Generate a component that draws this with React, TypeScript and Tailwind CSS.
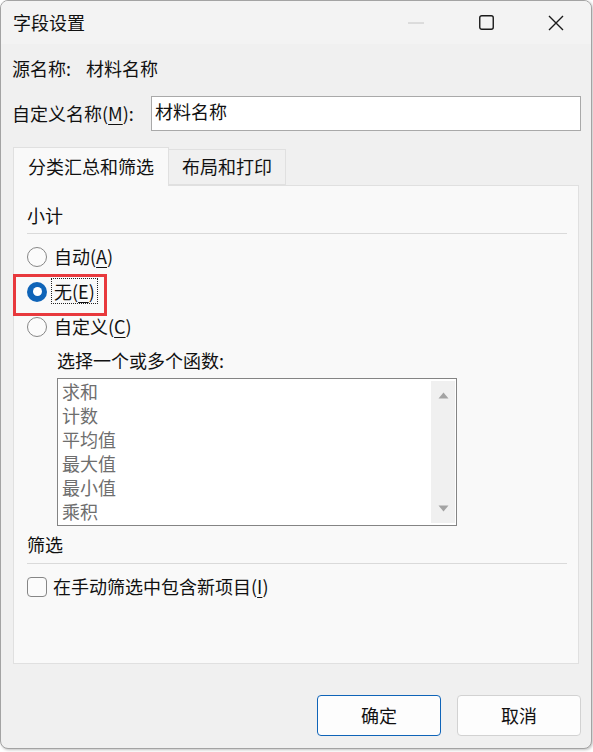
import React from "react"

const font = "font-['Microsoft_YaHei_UI','Noto_Sans_CJK_SC',sans-serif]"

function Radio({ checked }: { checked?: boolean }) {
  if (checked) {
    return (
      <span className="flex h-[20px] w-[20px] items-center justify-center rounded-full bg-[#0f64b8]">
        <span className="h-[9px] w-[9px] rounded-full bg-white" />
      </span>
    )
  }
  return <span className="h-[20px] w-[20px] rounded-full border border-[#868686] bg-[#fbfbfb]" />
}

function U({ children }: { children: React.ReactNode }) {
  return <span className="underline decoration-1 underline-offset-[3px]">{children}</span>
}

export default function App() {
  const funcs = ["求和", "计数", "平均值", "最大值", "最小值", "乘积"]

  return (
    <div className={`min-h-screen bg-white text-[18px] text-[#111] ${font}`}>
      <div className="flex h-[749px] w-[592px] flex-col overflow-hidden rounded-[8px] border border-[#a3a3a3] bg-[#f0f0f0] shadow-[1px_1px_3px_rgba(0,0,0,0.25)]">
        {/* title bar */}
        <div className="flex h-[43px] items-center bg-[#f3f3f3] pl-[12px]">
          <span className="pb-[2px] leading-[26px]">字段设置</span>
          <div className="ml-auto flex h-full">
            <div className="flex w-[70px] items-center justify-center">
              <svg width="16" height="2" viewBox="0 0 16 2">
                <line x1="0" y1="1" x2="16" y2="1" stroke="#c4c4c4" strokeWidth="1" />
              </svg>
            </div>
            <div className="flex w-[70px] items-center justify-center">
              <svg width="15" height="15" viewBox="0 0 15 15">
                <rect x="0.75" y="0.75" width="13.5" height="13.5" rx="2" fill="none" stroke="#1a1a1a" strokeWidth="1.4" />
              </svg>
            </div>
            <div className="flex w-[70px] items-center justify-center">
              <svg width="16" height="16" viewBox="0 0 16 16">
                <path d="M1 1 L15 15 M15 1 L1 15" stroke="#1a1a1a" strokeWidth="1.4" />
              </svg>
            </div>
          </div>
        </div>

        {/* body */}
        <div className="flex flex-1 flex-col pl-[11px] pr-[10px]">
          <div className="mt-[12px] flex h-[26px] items-center pb-[2px] leading-[24px]">
            <span className="w-[74px]">源名称:</span>
            <span>材料名称</span>
          </div>

          <div className="mt-[14px] flex h-[35px] items-center">
            <span className="w-[139px] pb-[2px] leading-[26px]">
              自定义名称(<U>M</U>):
            </span>
            <div className="h-[35px] flex-1 border border-[#a9a9a9] bg-white pl-[3px] pt-[1px] leading-[26px]">
              材料名称
            </div>
          </div>

          {/* tabs */}
          <div className="mt-[16px] flex items-end pl-[1px]">
            <div className="relative z-10 -mb-px flex h-[39px] w-[156px] items-center justify-center border border-b-0 border-[#e0e0e0] bg-[#f9f9f9] pb-[2px] leading-[26px]">
              分类汇总和筛选
            </div>
            <div className="flex h-[36px] w-[117px] items-center justify-center border border-l-0 border-[#e0e0e0] bg-[#f0f0f0] pb-[2px] leading-[26px]">
              布局和打印
            </div>
          </div>

          {/* panel */}
          <div className="ml-[1px] flex h-[479px] w-[566px] flex-col border border-[#e0e0e0] bg-[#f9f9f9] pl-[13px] pr-[11px]">
            <div className="mt-[16px] h-[26px] leading-[26px]">小计</div>
            <div className="mt-[5px] h-px bg-[#dadada]" />

            <div className="mt-[5px] flex h-[35px] items-center gap-[7px] leading-[26px]">
              <Radio />
              <span className="pb-[2px]">
                自动(<U>A</U>)
              </span>
            </div>
            <div className="relative flex h-[35px] items-center gap-[4px] leading-[26px]">
              <Radio checked />
              <span className="mb-[2px] border border-dotted border-[#222] px-[2px] leading-[24px]">
                无(<U>E</U>)
              </span>
              <div className="absolute left-[-14px] top-0 h-[42px] w-[94px] border-[3px] border-[#e8393d]" />
            </div>
            <div className="flex h-[35px] items-center gap-[7px] leading-[26px]">
              <Radio />
              <span className="pb-[2px]">
                自定义(<U>C</U>)
              </span>
            </div>

            <div className="mt-[3px] h-[26px] pl-[30px] leading-[26px]">选择一个或多个函数:</div>

            <div className="ml-[30px] mt-[5px] flex h-[148px] w-[400px] border border-[#848484] bg-white">
              <div className="flex-1 pl-[4px] pt-0 text-[#6e6e6e]">
                {funcs.map((f) => (
                  <div key={f} className="h-[24px] leading-[24px]">
                    {f}
                  </div>
                ))}
              </div>
              <div className="my-[2px] mr-[1px] flex w-[24px] flex-col items-center justify-between bg-[#f0f0f0] py-[11px]">
                <svg width="11" height="7" viewBox="0 0 11 7">
                  <path d="M5.5 0.5 L10.5 6.5 L0.5 6.5 Z" fill="#a3a3a3" />
                </svg>
                <svg width="11" height="7" viewBox="0 0 11 7">
                  <path d="M0.5 0.5 L10.5 0.5 L5.5 6.5 Z" fill="#a3a3a3" />
                </svg>
              </div>
            </div>

            <div className="mt-[5px] h-[26px] leading-[26px]">筛选</div>
            <div className="mt-[6px] h-px bg-[#dadada]" />

            <div className="mt-[10px] flex h-[26px] items-center gap-[6px] leading-[26px]">
              <span className="h-[20px] w-[20px] rounded-[4px] border border-[#868686] bg-[#fbfbfb]" />
              <span className="pb-[2px]">
                在手动筛选中包含新项目(<U>I</U>)
              </span>
            </div>
          </div>

          {/* buttons */}
          <div className="mt-[31px] flex justify-end gap-[16px]">
            <button className="h-[41px] w-[124px] rounded-[4px] border border-[#0f64b8] bg-[#fdfdfd] pb-[2px] leading-[26px]">
              确定
            </button>
            <button className="h-[41px] w-[124px] rounded-[4px] border border-[#d2d2d2] bg-[#fdfdfd] pb-[2px] leading-[26px]">
              取消
            </button>
          </div>
        </div>
      </div>
    </div>
  )
}
